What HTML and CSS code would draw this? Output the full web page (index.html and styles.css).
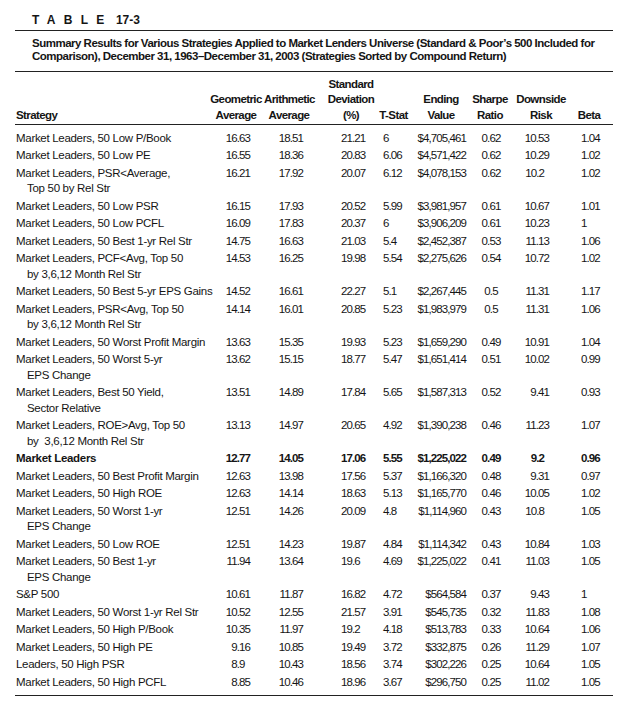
FILE: index.html
```html
<!DOCTYPE html>
<html>
<head>
<meta charset="utf-8">
<link rel="stylesheet" href="styles.css">
</head>
<body>
<div class="page">
  <div class="label"><span class="spaced">TABLE</span> 17-3</div>
  <div class="caption">Summary Results for Various Strategies Applied to Market Lenders Universe (Standard &amp; Poor’s 500 Included for<br>Comparison), December 31, 1963–December 31, 2003 (Strategies Sorted by Compound Return)</div>
  <table class="data">
    <colgroup>
      <col class="c-strat"><col class="c-geo"><col class="c-ari"><col class="c-std"><col class="c-t"><col class="c-end"><col class="c-sh"><col class="c-dn"><col class="c-beta">
    </colgroup>
    <thead>
      <tr>
        <th class="strat">Strategy</th>
        <th class="geo">Geometric<br>Average</th>
        <th class="ari">Arithmetic<br>Average</th>
        <th class="std">Standard<br>Deviation<br>(%)</th>
        <th class="t">T-Stat</th>
        <th class="end">Ending<br>Value</th>
        <th class="sh">Sharpe<br>Ratio</th>
        <th class="dn">Downside<br>Risk</th>
        <th class="beta">Beta</th>
      </tr>
    </thead>
    <tbody>
      <tr class="first"><td class="strat">Market Leaders, 50 Low P/Book</td><td class="geo">16.63</td><td class="ari">18.51</td><td class="std">21.21</td><td class="t">6</td><td class="end">$4,705,461</td><td class="sh">0.62</td><td class="dn">10.53</td><td class="beta">1.04</td></tr>
      <tr><td class="strat">Market Leaders, 50 Low PE</td><td class="geo">16.55</td><td class="ari">18.36</td><td class="std">20.83</td><td class="t">6.06</td><td class="end">$4,571,422</td><td class="sh">0.62</td><td class="dn">10.29</td><td class="beta">1.02</td></tr>
      <tr><td class="strat">Market Leaders, PSR&lt;Average,<br><span class="ind">Top 50 by Rel Str</span></td><td class="geo">16.21</td><td class="ari">17.92</td><td class="std">20.07</td><td class="t">6.12</td><td class="end">$4,078,153</td><td class="sh">0.62</td><td class="dn short">10.2</td><td class="beta">1.02</td></tr>
      <tr><td class="strat">Market Leaders, 50 Low PSR</td><td class="geo">16.15</td><td class="ari">17.93</td><td class="std">20.52</td><td class="t">5.99</td><td class="end">$3,981,957</td><td class="sh">0.61</td><td class="dn">10.67</td><td class="beta">1.01</td></tr>
      <tr><td class="strat">Market Leaders, 50 Low PCFL</td><td class="geo">16.09</td><td class="ari">17.83</td><td class="std">20.37</td><td class="t">6</td><td class="end">$3,906,209</td><td class="sh">0.61</td><td class="dn">10.23</td><td class="beta">1</td></tr>
      <tr><td class="strat">Market Leaders, 50 Best 1-yr Rel Str</td><td class="geo">14.75</td><td class="ari">16.63</td><td class="std">21.03</td><td class="t">5.4</td><td class="end">$2,452,387</td><td class="sh">0.53</td><td class="dn">11.13</td><td class="beta">1.06</td></tr>
      <tr><td class="strat">Market Leaders, PCF&lt;Avg, Top 50<br><span class="ind">by 3,6,12 Month Rel Str</span></td><td class="geo">14.53</td><td class="ari">16.25</td><td class="std">19.98</td><td class="t">5.54</td><td class="end">$2,275,626</td><td class="sh">0.54</td><td class="dn">10.72</td><td class="beta">1.02</td></tr>
      <tr><td class="strat">Market Leaders, 50 Best 5-yr EPS Gains</td><td class="geo">14.52</td><td class="ari">16.61</td><td class="std">22.27</td><td class="t">5.1</td><td class="end">$2,267,445</td><td class="sh">0.5</td><td class="dn">11.31</td><td class="beta">1.17</td></tr>
      <tr><td class="strat">Market Leaders, PSR&lt;Avg, Top 50<br><span class="ind">by 3,6,12 Month Rel Str</span></td><td class="geo">14.14</td><td class="ari">16.01</td><td class="std">20.85</td><td class="t">5.23</td><td class="end">$1,983,979</td><td class="sh">0.5</td><td class="dn">11.31</td><td class="beta">1.06</td></tr>
      <tr><td class="strat">Market Leaders, 50 Worst Profit Margin</td><td class="geo">13.63</td><td class="ari">15.35</td><td class="std">19.93</td><td class="t">5.23</td><td class="end">$1,659,290</td><td class="sh">0.49</td><td class="dn">10.91</td><td class="beta">1.04</td></tr>
      <tr><td class="strat">Market Leaders, 50 Worst 5-yr<br><span class="ind">EPS Change</span></td><td class="geo">13.62</td><td class="ari">15.15</td><td class="std">18.77</td><td class="t">5.47</td><td class="end">$1,651,414</td><td class="sh">0.51</td><td class="dn">10.02</td><td class="beta">0.99</td></tr>
      <tr><td class="strat">Market Leaders, Best 50 Yield,<br><span class="ind">Sector Relative</span></td><td class="geo">13.51</td><td class="ari">14.89</td><td class="std">17.84</td><td class="t">5.65</td><td class="end">$1,587,313</td><td class="sh">0.52</td><td class="dn">9.41</td><td class="beta">0.93</td></tr>
      <tr><td class="strat">Market Leaders, ROE&gt;Avg, Top 50<br><span class="ind">by&nbsp; 3,6,12 Month Rel Str</span></td><td class="geo">13.13</td><td class="ari">14.97</td><td class="std">20.65</td><td class="t">4.92</td><td class="end">$1,390,238</td><td class="sh">0.46</td><td class="dn">11.23</td><td class="beta">1.07</td></tr>
      <tr class="bold"><td class="strat">Market Leaders</td><td class="geo">12.77</td><td class="ari">14.05</td><td class="std">17.06</td><td class="t">5.55</td><td class="end">$1,225,022</td><td class="sh">0.49</td><td class="dn short">9.2</td><td class="beta">0.96</td></tr>
      <tr><td class="strat">Market Leaders, 50 Best Profit Margin</td><td class="geo">12.63</td><td class="ari">13.98</td><td class="std">17.56</td><td class="t">5.37</td><td class="end">$1,166,320</td><td class="sh">0.48</td><td class="dn">9.31</td><td class="beta">0.97</td></tr>
      <tr><td class="strat">Market Leaders, 50 High ROE</td><td class="geo">12.63</td><td class="ari">14.14</td><td class="std">18.63</td><td class="t">5.13</td><td class="end">$1,165,770</td><td class="sh">0.46</td><td class="dn">10.05</td><td class="beta">1.02</td></tr>
      <tr><td class="strat">Market Leaders, 50 Worst 1-yr<br><span class="ind">EPS Change</span></td><td class="geo">12.51</td><td class="ari">14.26</td><td class="std">20.09</td><td class="t">4.8</td><td class="end">$1,114,960</td><td class="sh">0.43</td><td class="dn short">10.8</td><td class="beta">1.05</td></tr>
      <tr><td class="strat">Market Leaders, 50 Low ROE</td><td class="geo">12.51</td><td class="ari">14.23</td><td class="std">19.87</td><td class="t">4.84</td><td class="end">$1,114,342</td><td class="sh">0.43</td><td class="dn">10.84</td><td class="beta">1.03</td></tr>
      <tr><td class="strat">Market Leaders, 50 Best 1-yr<br><span class="ind">EPS Change</span></td><td class="geo">11.94</td><td class="ari">13.64</td><td class="std">19.6</td><td class="t">4.69</td><td class="end">$1,225,022</td><td class="sh">0.41</td><td class="dn">11.03</td><td class="beta">1.05</td></tr>
      <tr><td class="strat">S&amp;P 500</td><td class="geo">10.61</td><td class="ari">11.87</td><td class="std">16.82</td><td class="t">4.72</td><td class="end">$564,584</td><td class="sh">0.37</td><td class="dn">9.43</td><td class="beta">1</td></tr>
      <tr><td class="strat">Market Leaders, 50 Worst 1-yr Rel Str</td><td class="geo">10.52</td><td class="ari">12.55</td><td class="std">21.57</td><td class="t">3.91</td><td class="end">$545,735</td><td class="sh">0.32</td><td class="dn">11.83</td><td class="beta">1.08</td></tr>
      <tr><td class="strat">Market Leaders, 50 High P/Book</td><td class="geo">10.35</td><td class="ari">11.97</td><td class="std">19.2</td><td class="t">4.18</td><td class="end">$513,783</td><td class="sh">0.33</td><td class="dn">10.64</td><td class="beta">1.06</td></tr>
      <tr><td class="strat">Market Leaders, 50 High PE</td><td class="geo">9.16</td><td class="ari">10.85</td><td class="std">19.49</td><td class="t">3.72</td><td class="end">$332,875</td><td class="sh">0.26</td><td class="dn">11.29</td><td class="beta">1.07</td></tr>
      <tr><td class="strat">Leaders, 50 High PSR</td><td class="geo short">8.9</td><td class="ari">10.43</td><td class="std">18.56</td><td class="t">3.74</td><td class="end">$302,226</td><td class="sh">0.25</td><td class="dn">10.64</td><td class="beta">1.05</td></tr>
      <tr class="last"><td class="strat">Market Leaders, 50 High PCFL</td><td class="geo">8.85</td><td class="ari">10.46</td><td class="std">18.96</td><td class="t">3.67</td><td class="end">$296,750</td><td class="sh">0.25</td><td class="dn">11.02</td><td class="beta">1.05</td></tr>
    </tbody>
  </table>
</div>
</body>
</html>
```
FILE: styles.css
```css
html, body {
  margin: 0;
  padding: 0;
  background: #ffffff;
}
body {
  font-family: "Liberation Sans", Arial, sans-serif;
  color: #151515;
  font-size: 11.5px;
}
.page {
  width: 598px;
  padding: 12px 0 0 15px;
}
.label {
  font-weight: bold;
  font-size: 12px;
  line-height: 16px;
  padding-left: 17px;
  padding-bottom: 2px;
  border-bottom: 1px solid #222;
}
.spaced {
  letter-spacing: 8.3px;
}
.caption {
  font-weight: bold;
  font-size: 11.5px;
  line-height: 13px;
  letter-spacing: -0.5px;
  white-space: nowrap;
  padding: 6px 0 8px 17px;
  border-bottom: 1px solid #222;
}
.data {
  width: 598px;
  table-layout: fixed;
  border-collapse: collapse;
  margin-top: 4.5px;
}
.c-strat { width: 193px; }
.c-geo { width: 56px; }
.c-ari { width: 50px; }
.c-std { width: 62px; }
.c-t { width: 38px; }
.c-end { width: 54px; }
.c-sh { width: 44px; }
.c-dn { width: 58px; }
.c-beta { width: 43px; }

th {
  font-weight: bold;
  line-height: 15.5px;
  letter-spacing: -0.6px;
  vertical-align: bottom;
  text-align: center;
  padding: 0 0 1px 0;
  white-space: nowrap;
  border-bottom: 1px solid #222;
}
th.strat { text-align: left; padding-left: 1px; }
th.std { padding-left: 12px; }
th.t { padding-right: 3px; }
th.beta { padding-right: 5px; }

td {
  line-height: 15.5px;
  padding: 1px 0;
  vertical-align: top;
  white-space: nowrap;
  letter-spacing: -0.9px;
}
tbody tr.first td { padding-top: 5.5px; }
tbody tr.last td { padding-bottom: 5px; border-bottom: 1px solid #222; }
tr.bold td { font-weight: bold; }

td.strat { padding-left: 1px; letter-spacing: -0.3px; }
.ind { padding-left: 11px; }
td.geo { text-align: right; padding-right: 14px; }
td.geo.short { padding-right: 19.5px; }
td.ari { text-align: right; padding-right: 11px; }
td.std { text-align: left; padding-left: 27px; }
td.t { text-align: left; padding-left: 7px; }
td.end { text-align: right; padding-right: 2px; }
td.sh { text-align: center; padding-left: 2px; }
td.dn { text-align: right; padding-right: 21px; }
td.dn.short { padding-right: 26px; }
td.beta { text-align: left; padding-left: 11px; }
```
